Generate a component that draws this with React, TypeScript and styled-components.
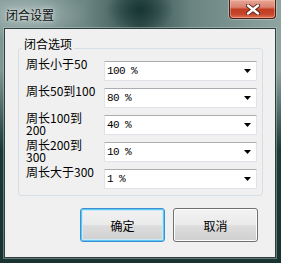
import React from 'react';
import styled, { createGlobalStyle, css } from 'styled-components';

const GlobalStyle = createGlobalStyle`
  html, body {
    margin: 0;
    padding: 0;
    overflow: hidden;
    background: #1f3a38;
  }
  * {
    box-sizing: border-box;
  }
`;

const UI_FONT = `"Noto Sans CJK SC", "Noto Sans", "Liberation Sans", sans-serif`;

const Window = styled.div`
  width: 281px;
  height: 263px;
  display: flex;
  flex-direction: column;
  background:
    radial-gradient(ellipse 34px 22px at 140px 10px, rgba(22, 52, 50, 0.95), rgba(22, 52, 50, 0)),
    radial-gradient(ellipse 60px 26px at 28px 14px, rgba(200, 214, 212, 0.55), rgba(200, 214, 212, 0)),
    linear-gradient(180deg, rgba(20, 50, 48, 0) 0, rgba(20, 50, 48, 0) 70px, rgba(20, 52, 50, 0.95) 150px, #183331 263px),
    linear-gradient(90deg, #7f9794 0%, #6d8784 30%, #33504d 50%, #6a8481 68%, #8fa4a1 100%);
  font-family: ${UI_FONT};
`;

const TitleBar = styled.div`
  height: 28px;
  display: flex;
  align-items: flex-start;
  justify-content: space-between;
  flex-shrink: 0;
`;

const Title = styled.div`
  padding: 7px 0 0 6px;
  font-size: 12px;
  line-height: 15px;
  color: #111;
  text-shadow: 0 0 8px rgba(235, 242, 241, 0.9), 0 0 3px rgba(235, 242, 241, 0.8);
`;

const CloseButton = styled.div`
  width: 47px;
  height: 19px;
  margin-right: 5px;
  display: flex;
  align-items: center;
  justify-content: center;
  border: 1px solid #4a1e16;
  border-top: none;
  border-radius: 0 0 4px 4px;
  background: linear-gradient(
    180deg,
    #e7a696 0%,
    #d9826f 40%,
    #c23d22 52%,
    #c4452a 78%,
    #de7556 100%
  );
  box-shadow: inset 0 0 0 1px rgba(255, 200, 185, 0.45), 0 0 0 1px rgba(230, 240, 240, 0.35);
`;

const Client = styled.div`
  flex: 1;
  margin: 0 5px 5px 4px;
  border: 1px solid #2c3d3c;
  background: #f0f0f0;
  display: flex;
  flex-direction: column;
  box-shadow: 0 0 0 1px rgba(190, 205, 204, 0.45);
`;

const GroupBox = styled.div`
  position: relative;
  margin: 19px 0 0 13px;
  width: 245px;
  height: 148px;
  border: 1px solid #d5dfe5;
  border-radius: 3px;
  padding: 12px 5px 0 7px;
`;

const Caption = styled.span`
  position: absolute;
  top: -12px;
  left: 3px;
  padding: 0 2px;
  background: #f0f0f0;
  font-size: 12px;
  line-height: 14px;
  color: #000;
`;

const Rows = styled.div`
  display: grid;
  grid-template-columns: 78px 153px;
  grid-auto-rows: 20px;
  row-gap: 7px;
`;

const FieldLabel = styled.div`
  align-self: start;
  margin-top: -3px;
  font-size: 12px;
  line-height: 12px;
  color: #000;
  white-space: nowrap;
`;

const Combo = styled.div`
  height: 20px;
  display: flex;
  align-items: center;
  justify-content: space-between;
  padding: 0 5px 0 2px;
  background: #fff;
  border: 1px solid #e2e3ea;
  border-top-color: #abadb3;
  border-radius: 1px;
`;

const ComboText = styled.span`
  font-family: "Liberation Mono", "DejaVu Sans Mono", monospace;
  font-size: 11px;
  letter-spacing: -0.6px;
  color: #000;
  white-space: pre;
`;

const Footer = styled.div`
  display: flex;
  justify-content: flex-end;
  gap: 8px;
  margin-top: 12px;
  padding-right: 17px;
`;

const Button = styled.div<{ $default?: boolean }>`
  width: 85px;
  height: 34px;
  display: flex;
  align-items: center;
  justify-content: center;
  border: 1px solid #707070;
  border-radius: 3px;
  font-size: 12px;
  color: #000;
  background: linear-gradient(180deg, #f2f2f2 0%, #ebebeb 48%, #dddddd 52%, #cfcfcf 100%);
  box-shadow: inset 0 0 0 1px #fcfcfc;
  ${({ $default }) =>
    $default &&
    css`
      border-color: #3c8fd0;
      box-shadow: inset 0 0 0 1px #5ec8f2, inset 0 0 0 2px #c9ecfa;
    `}
`;

const Arrow = () => (
  <svg width="7" height="4" viewBox="0 0 7 4">
    <path d="M0 0h7L3.5 4z" fill="#000" />
  </svg>
);

const CloseIcon = () => (
  <svg width="14" height="11" viewBox="0 0 14 11">
    <path d="M2 1.5L12 9.5M12 1.5L2 9.5" stroke="#5a2018" strokeWidth="4.2" strokeLinecap="round" />
    <path d="M2 1.5L12 9.5M12 1.5L2 9.5" stroke="#fff" strokeWidth="2.4" strokeLinecap="round" />
  </svg>
);

const rows: { label: React.ReactNode; value: string }[] = [
  { label: '周长小于50', value: '100 %' },
  { label: '周长50到100', value: '80 %' },
  { label: <>周长100到<br />200</>, value: '40 %' },
  { label: <>周长200到<br />300</>, value: '10 %' },
  { label: '周长大于300', value: '1 %' },
];

export const App: React.FC = () => {
  return (
    <>
      <GlobalStyle />
      <Window>
        <TitleBar>
          <Title>闭合设置</Title>
          <CloseButton>
            <CloseIcon />
          </CloseButton>
        </TitleBar>
        <Client>
          <GroupBox>
            <Caption>闭合选项</Caption>
            <Rows>
              {rows.map((row, i) => (
                <React.Fragment key={i}>
                  <FieldLabel>{row.label}</FieldLabel>
                  <Combo>
                    <ComboText>{row.value}</ComboText>
                    <Arrow />
                  </Combo>
                </React.Fragment>
              ))}
            </Rows>
          </GroupBox>
          <Footer>
            <Button $default>确定</Button>
            <Button>取消</Button>
          </Footer>
        </Client>
      </Window>
    </>
  );
};

export default App;
